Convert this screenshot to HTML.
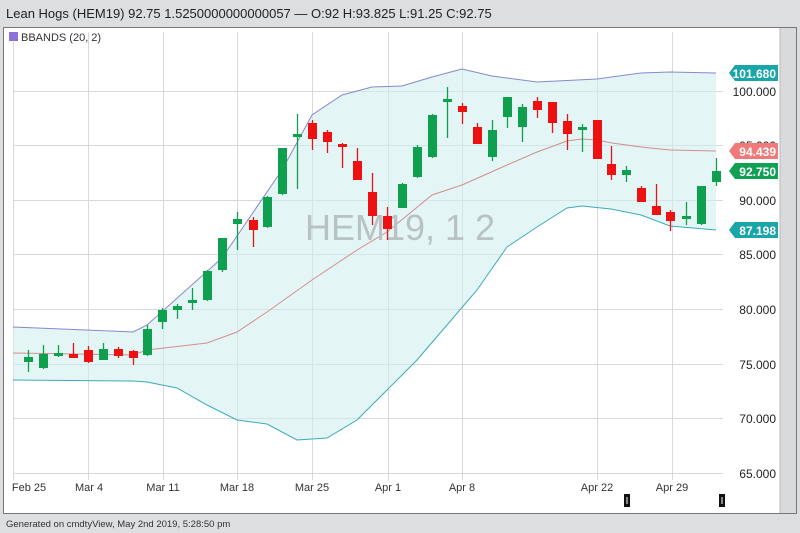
<!DOCTYPE html>
<html><head><style>
html,body{margin:0;padding:0;width:800px;height:533px;overflow:hidden;background:#dcdee0;font-family:"Liberation Sans",sans-serif}
</style></head><body>
<svg width="800" height="533" xmlns="http://www.w3.org/2000/svg" style="position:absolute;left:0;top:0">
<rect x="0" y="0" width="800" height="533" fill="#dcdee0"/>
<text x="6" y="18" font-size="13" fill="#222">Lean Hogs (HEM19) 92.75 1.5250000000000057 — O:92 H:93.825 L:91.25 C:92.75</text>
<rect x="3.5" y="27.5" width="793" height="486" fill="#fff" stroke="#777"/>
<rect x="780" y="28" width="16" height="485" fill="#d8dadd"/>
<line x1="780" y1="28" x2="780" y2="513" stroke="#bbb"/>
<rect x="9" y="32" width="9" height="9" fill="#8d70d8"/>
<text x="21" y="41" font-size="11" fill="#333">BBANDS (20, 2)</text>
<g stroke="#d6d8dc" stroke-width="1">
<line x1="13.5" y1="42" x2="13.5" y2="480"/><line x1="88.5" y1="32" x2="88.5" y2="480"/><line x1="163.5" y1="32" x2="163.5" y2="480"/><line x1="237.5" y1="32" x2="237.5" y2="480"/><line x1="312.5" y1="32" x2="312.5" y2="480"/><line x1="388.5" y1="32" x2="388.5" y2="480"/><line x1="462.5" y1="32" x2="462.5" y2="480"/><line x1="597.5" y1="32" x2="597.5" y2="480"/><line x1="672.5" y1="32" x2="672.5" y2="480"/>
<line x1="13" y1="91.5" x2="723" y2="91.5"/><line x1="13" y1="145.5" x2="723" y2="145.5"/><line x1="13" y1="200.5" x2="723" y2="200.5"/><line x1="13" y1="254.5" x2="723" y2="254.5"/><line x1="13" y1="309.5" x2="723" y2="309.5"/><line x1="13" y1="364.5" x2="723" y2="364.5"/><line x1="13" y1="418.5" x2="723" y2="418.5"/><line x1="13" y1="473.5" x2="723" y2="473.5"/>
</g>
<polygon fill="#d2eeee" fill-opacity="0.6" points="13,327 133,332 147,325 222,258 282,170 312,115 342,95 372,87 402,86 432,77 462,69 492,76 537,82 597,79 641,73 670,72 716,73 716,230 670,226 641,215 611,209 582,206 567,208 537,227 507,247 477,290 447,325 417,360 387,390 357,420 327,438 297,440 267,424 237,420 207,405 177,388 147,382 133,381 13,380"/>
<polyline fill="none" stroke="#8888cc" points="13,327 133,332 147,325 222,258 282,170 312,115 342,95 372,87 402,86 432,77 462,69 492,76 537,82 597,79 641,73 670,72 716,73"/>
<polyline fill="none" stroke="#d09090" points="13,353 133,355 147,350 207,343 237,332 267,312 312,280 357,250 387,232 432,195 462,185 507,165 537,152 567,141 582,139 597,140 612,143 641,147 670,150 716,151"/>
<polyline fill="none" stroke="#3aacb8" points="13,380 133,381 147,382 177,388 207,405 237,420 267,424 297,440 327,438 357,420 387,390 417,360 447,325 477,290 507,247 537,227 567,208 582,206 611,209 641,215 670,226 716,230"/>
<text x="400" y="240" font-size="36" fill="#b8c2c4" text-anchor="middle">HEM19, 1 2</text>
<g id="c"></g>
<g font-size="12" fill="#222" text-anchor="end">
<text x="776" y="96">100.000</text><text x="776" y="150">95.000</text><text x="776" y="205">90.000</text><text x="776" y="259">85.000</text><text x="776" y="314">80.000</text><text x="776" y="369">75.000</text><text x="776" y="423">70.000</text><text x="776" y="478">65.000</text>
</g>
<g font-size="12" fill="#fff" font-weight="bold" text-anchor="end">
<polygon points="729,73 735,65 778,65 778,81 735,81" fill="#1aa5a8"/><text x="776" y="78">101.680</text>
<polygon points="729,151 735,143 778,143 778,159 735,159" fill="#f07a7a"/><text x="776" y="156">94.439</text>
<polygon points="729,171 735,163 778,163 778,179 735,179" fill="#12a055"/><text x="776" y="176">92.750</text>
<polygon points="729,230 735,222 778,222 778,238 735,238" fill="#1aa5a8"/><text x="776" y="235">87.198</text>
</g>
<g font-size="11" fill="#333" text-anchor="middle">
<text x="29" y="491">Feb 25</text><text x="89" y="491">Mar 4</text><text x="163" y="491">Mar 11</text><text x="237" y="491">Mar 18</text><text x="312" y="491">Mar 25</text><text x="388" y="491">Apr 1</text><text x="462" y="491">Apr 8</text><text x="597" y="491">Apr 22</text><text x="672" y="491">Apr 29</text>
</g>
<rect x="624" y="494" width="6" height="13" fill="#111"/><line x1="627" y1="497" x2="627" y2="504" stroke="#fff"/>
<rect x="719" y="494" width="6" height="13" fill="#111"/><line x1="722" y1="497" x2="722" y2="504" stroke="#fff"/>
<text x="6" y="527" font-size="9.5" fill="#333">Generated on cmdtyView, May 2nd 2019, 5:28:50 pm</text>
</svg>
<script>
var d=[[28,357,362,350,372,1],[43,354,368,345,369,1],[58,353,355,345,357,1],[73,354,358,343,358,0],[88,350,362,346,363,0],[103,349,360,343,360,1],[118,349,356,347,358,0],[133,351,358,350,365,0],[147,329,355,325,356,1],[162,310,322,308,329,1],[177,306,310,304,319,1],[192,300,303,288,310,1],[207,271,300,270,301,1],[222,238,270,238,272,1],[237,219,224,212,250,1],[253,220,230,217,247,0],[267,197,227,196,228,1],[282,148,194,148,195,1],[297,134,137,114,189,1],[312,123,139,120,150,0],[327,132,142,130,153,0],[342,144,147,143,168,0],[357,161,180,148,180,0],[372,192,216,173,225,0],[387,216,229,207,240,0],[402,184,208,183,208,1],[417,147,177,145,178,1],[432,115,157,114,158,1],[447,99,102,87,138,1],[462,106,112,103,124,0],[477,127,144,123,144,0],[492,130,157,120,161,1],[507,97,117,97,128,1],[522,107,127,104,142,1],[537,101,110,97,118,0],[552,102,123,102,133,0],[567,121,134,114,150,0],[582,127,130,124,152,1],[597,120,159,120,159,0],[611,164,175,146,180,0],[626,170,175,166,182,1],[641,188,202,186,202,0],[656,206,215,184,215,0],[670,212,221,210,231,0],[686,216,219,202,225,1],[701,186,224,186,225,1],[716,171,182,158,186,1]];
var g=document.getElementById('c'),s='';
d.forEach(function(c){var col=c[5]?'#0fa04f':'#ee1111';
s+='<line x1="'+(c[0]+.5)+'" y1="'+c[3]+'" x2="'+(c[0]+.5)+'" y2="'+c[4]+'" stroke="'+col+'" stroke-width="1.3"/>';
s+='<rect x="'+(c[0]-4)+'" y="'+c[1]+'" width="9" height="'+Math.max(3,c[2]-c[1])+'" fill="'+col+'"/>';});
g.innerHTML=s;
</script>
</body></html>
